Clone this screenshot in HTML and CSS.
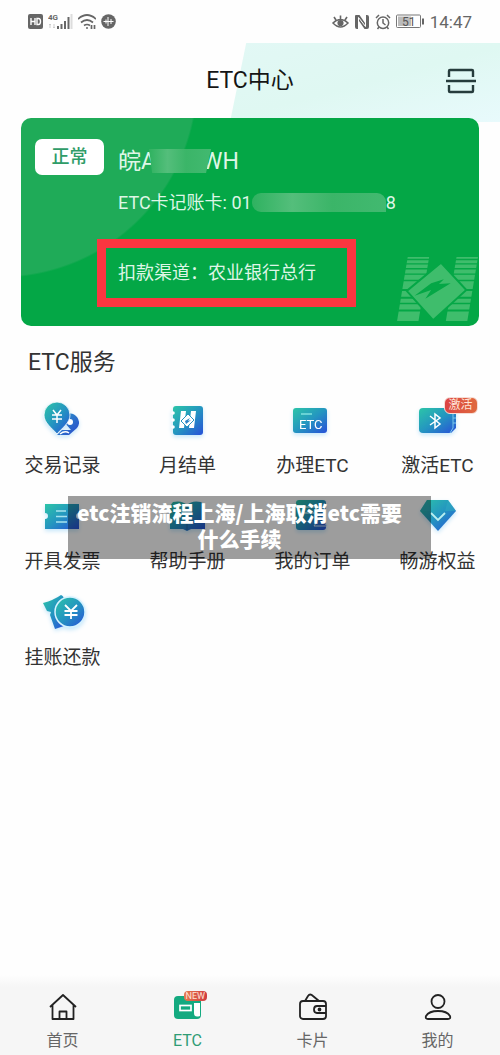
FILE: index.html
```html
<!DOCTYPE html>
<html lang="zh-CN">
<head>
<meta charset="utf-8">
<meta name="viewport" content="width=device-width, initial-scale=1">
<title>ETC中心</title>
<link rel="stylesheet" href="styles.css">
</head>
<body>
<svg class="defs" aria-hidden="true">
  <defs>
    <linearGradient id="blend" x1="0" y1="0" x2="1" y2="1"><stop offset="0" stop-color="#2cc5a8"/><stop offset=".5" stop-color="#2496c0"/><stop offset="1" stop-color="#2850d8"/></linearGradient>
    <linearGradient id="deep" x1="0" y1="0" x2="1" y2="1"><stop offset="0" stop-color="#2a9cc8"/><stop offset="1" stop-color="#2c48cc"/></linearGradient>
  </defs>
</svg>
<div class="page">
  <div class="status">
    <div class="status-group">
      <svg width="15" height="15" viewBox="0 0 15 15"><rect width="15" height="15" rx="2" fill="#666"/><path d="M3 4v7M7 4v7M3 7.500h4M9 4.500v6h1.500q2 0 2-3t-2-3z" fill="none" stroke="#fff" stroke-width="1.400"/></svg>
      <svg width="25" height="17" viewBox="0 0 25 17"><text x="0" y="7" class="tiny">4G</text><path d="M2 11v4M1 12l1-1 1 1M6 11v4M5 14l1 1 1-1" stroke="#ccc" fill="none"/><path d="M10 13v3M13.500 11v5M17 8v8M20.500 4v12" stroke="#666" stroke-width="2"/><path d="M23.500 1v15" stroke="#ddd" stroke-width="2"/></svg>
      <svg width="18" height="17" viewBox="0 0 18 17" fill="none" stroke="#666" stroke-width="1.700"><path d="M0 6Q9-2 18 6M3 9.500q6-5 12 0M6 12.500q3-2 6 0"/><circle cx="9" cy="15" r="1" fill="#666" stroke="none"/><path d="M13.500 12v4M16.500 12v4"/></svg>
      <svg width="15" height="15" viewBox="0 0 15 15"><circle cx="7.500" cy="7.500" r="7.300" fill="#666"/><path d="M2.500 7.500h10M5 5.500v4M7 3v9M10 5v5" stroke="#fff" stroke-width="1"/></svg>
    </div>
    <div class="status-group right">
      <svg width="17" height="16" viewBox="0 0 17 16" fill="none" stroke="#666" stroke-width="1.600"><path d="M1 9q7.500-7 15 0-7.500 8-15 0zM8.500 5V1.500M4 6L2 3M13 6l2-3"/><circle cx="8.500" cy="9" r="2.300" fill="#666"/></svg>
      <svg width="16" height="16" viewBox="0 0 16 16"><path d="M2 1h3.500L11 9V1h2q2 0 2 2v10q0 2-2 2h-2.500L5 7v8H3q-2 0-2-2V2q0-1 1-1z" fill="#666"/><path d="M4.500 15V3.500l7 9V1" fill="none" stroke="#fff" stroke-width="1"/></svg>
      <svg width="16" height="16" viewBox="0 0 16 16" fill="none" stroke="#666" stroke-width="1.500"><circle cx="8" cy="8.700" r="5.700"/><path d="M8 5v4l2.500 2M1 4l3-3M15 4l-3-3M4 13l-1.500 2M12 13l1.500 2"/></svg>
      <svg width="29" height="15" viewBox="0 0 29 15"><rect x=".5" y="1" width="24" height="12.500" rx="1" fill="#fff" stroke="#777"/><path d="M2 2.500h13v9.500H2z" fill="#bbb"/><path d="M27 4.500v6" stroke="#666" stroke-width="2"/><text x="6" y="11.500" class="charge">51</text></svg>
      <span class="time">14:47</span>
    </div>
  </div>

  <header class="header">
    <h1>ETC中心</h1>
    <button class="scan" type="button" aria-label="扫一扫"><svg width="30" height="26" viewBox="0 0 30 26" fill="none" stroke="#263c3c" stroke-width="2.400"><path d="M3 9V3q0-1 1-1h22q1 0 1 1v6M0 13h30M3 17v6q0 1 1 1h22q1 0 1-1v-6"/></svg></button>
  </header>

  <main>
    <section class="card">
      <span class="badge">正常</span>
      <div class="details">
        <p class="plate">皖A<span class="mosaic short"></span>WH</p>
        <p class="account">ETC卡记账卡: 01<span class="mosaic long"></span>8</p>
        <p class="channel">扣款渠道：农业银行总行</p>
      </div>
      <svg class="emblem" width="82" height="66" viewBox="0 0 84 66" aria-hidden="true">
        <defs><clipPath id="legs"><path d="M11 0h22L22 66H0zM61 0h22L72 66H50z"/></clipPath></defs>
        <path clip-path="url(#legs)" fill="#3fbd6c" d="M0 0h84v2H0zM0 3.500h84v3H0zM0 8h84v3.500H0zM0 13h84v4H0zM0 18.500h84v5H0zM0 25h84v8H0zM0 35h84v6H0zM0 43h84v4H0zM0 48.500h84v5.500H0zM0 56h84v10H0z"/>
        <path d="M45 6l26 28-34 31L10 35z" fill="#3fbd6c" stroke="#04a746" stroke-width="2"/>
        <path d="M18 40l17-13 13-4-5 5 12-1-26 16 6-9z" fill="#04a746"/>
      </svg>
    </section>

    <section class="services">
      <h2>ETC服务</h2>
      <div class="grid">
        <a class="item" href="#"><svg class="icon" viewBox="0 0 40 40"><path d="M24 14a9 9 0 0 1 10 14L26 35H14l5-5h9l-6-7z" fill="url(#deep)"/><path d="M17 34q5-4 9-1" fill="none" stroke="#fff" stroke-width="1.500"/><circle cx="27" cy="22" r="3" fill="#fff"/><path d="M14 34C9 28 1 23 1 15a13 13 0 0 1 26 0c0 8-8 13-13 19z" fill="url(#blend)" stroke="#fff" stroke-width=".8"/><path d="M10 10l4 5 4-5M14 15v8M9 15h10M9 19h10" fill="none" stroke="#fff" stroke-width="1.500"/></svg><span>交易记录</span></a>
        <a class="item" href="#"><svg class="icon" viewBox="0 0 40 40"><rect x="5" y="6" width="30" height="29" rx="3" fill="url(#blend)"/><g fill="#fff"><circle cx="5" cy="13" r="1.800"/><circle cx="5" cy="20" r="1.800"/><circle cx="5" cy="27" r="1.800"/><path d="M13 11h5l-2 17h-5zM23 11h5l-2 17h-5z"/><path d="M20 14l6 6-7 7-6-6z" stroke="#2794c0"/></g><path d="M17 21l5-3-2 3 3-1-5 4z" fill="#2b83c6"/></svg><span>月结单</span></a>
        <a class="item" href="#"><svg class="icon" viewBox="0 0 40 40"><rect x="0" y="8" width="34" height="25" rx="3" fill="url(#blend)"/><path d="M8 14h11" stroke="#7ee0df" stroke-width="1.500"/><text x="6" y="29" class="icon-text">ETC</text></svg><span>办理ETC</span></a>
        <a class="item" href="#"><svg class="icon" viewBox="0 0 40 40"><path d="M5 8h29q4 0 4 4v16l-5 5H5q-4 0-4-4V12q0-4 4-4z" fill="url(#blend)"/><path d="M35 14v14l-3 5M35 18h3M35 23h3" fill="none" stroke="#78c9ec"/><path d="M12 16l10 8-5 4V14l5 4-10 7" fill="none" stroke="#fff" stroke-width="1.500"/></svg><b class="tag">激活</b><span>激活ETC</span></a>
        <a class="item" href="#"><svg class="icon" viewBox="0 0 40 40"><path d="M2 8h34v9a3 3 0 0 0 0 6v10H2V23a3 3 0 0 0 0-6z" fill="url(#blend)"/><path d="M13 15h10M13 20.500h11M13 26h11" stroke="#a6e3ee" stroke-width="1.600"/></svg><span>开具发票</span></a>
        <a class="item" href="#"><svg class="icon" viewBox="0 0 40 40"><path d="M2 10l3-4q9-2 14 3 5-5 14-3l4 4v23H23l-4 2-4-2H2z" fill="url(#blend)"/><path d="M19 10v24" stroke="#2367a0"/></svg><span>帮助手册</span></a>
        <a class="item" href="#"><svg class="icon" viewBox="0 0 40 40"><rect x="3" y="4" width="30" height="30" rx="3" fill="url(#blend)"/><path d="M9 11h18M9 17h12" stroke="#a6e3ee" stroke-width="1.500"/><path d="M21 30l6-9 7 9z" fill="url(#deep)" stroke="#c9e4f8"/></svg><span>我的订单</span></a>
        <a class="item" href="#"><svg class="icon" viewBox="0 0 40 40"><path d="M9 4h21l8 11-18 20L2 15z" fill="url(#blend)"/><path d="M9 4L2 15h11zM30 4l8 11H27z" fill="#2faec0" opacity=".5"/><path d="M13 17l7 7 7-7" fill="none" stroke="#b9eff0" stroke-width="1.800"/></svg><span>畅游权益</span></a>
        <a class="item" href="#"><svg class="icon wide" viewBox="0 0 46 40"><path d="M3 11Q14 8 21 3q3 1 3 5v26l-9 3-5-14 1-3-4-1z" fill="url(#blend)"/><circle cx="30" cy="20" r="15" fill="url(#blend)" stroke="#d5f2ff" stroke-width="1.500"/><path d="M25 13l6 6 6-6M31 19v8M24.500 19h13M24.500 23h13" fill="none" stroke="#fff" stroke-width="1.800"/></svg><span>挂账还款</span></a>
      </div>
      <p class="caption">etc注销流程上海/上海取消etc需要什么手续</p>
    </section>
  </main>

  <nav class="tabs">
    <a class="tab" href="#"><svg class="tab-icon" viewBox="0 0 28 28" fill="none" stroke="#222" stroke-width="1.800" stroke-linejoin="round"><path d="M1 14L14 2l13 12M3.500 12v14h21V12M10.500 26v-7.500h7V26"/></svg><span>首页</span></a>
    <a class="tab active" href="#"><svg class="tab-icon" viewBox="0 0 28 28"><rect y="3" width="27" height="23" rx="4" fill="#14aa80"/><path d="M20 10h6v13q-6 2-6-3z" fill="#fff"/><rect x="6" y="12.500" width="11" height="5" fill="none" stroke="#fff" stroke-width="1.700"/></svg><b class="new">NEW</b><span>ETC</span></a>
    <a class="tab" href="#"><svg class="tab-icon" viewBox="0 0 28 28" fill="none" stroke="#222" stroke-width="1.800" stroke-linejoin="round"><rect x="1" y="8" width="26" height="18" rx="3"/><path d="M6 8l3-5q2-3 5 0l6 5M27 13h-9q-3 0-3 3.500t3 3.500h9"/><circle cx="20.500" cy="16.500" r="1" fill="#222"/></svg><span>卡片</span></a>
    <a class="tab" href="#"><svg class="tab-icon" viewBox="0 0 28 28" fill="none" stroke="#222" stroke-width="1.800"><circle cx="14" cy="8.500" r="6.500"/><path d="M4 26q-3 0-2-3 3-5 12-5t12 5q1 3-2 3z"/></svg><span>我的</span></a>
  </nav>
</div>
</body>
</html>
```
FILE: styles.css
```css
* { box-sizing: border-box; }
body { margin: 0; background: #fefefe; color: #333; font-family: Roboto, "Noto Sans CJK SC", sans-serif; }
h1, h2, p { margin: 0; font-weight: 400; }
a { color: inherit; text-decoration: none; }
svg { display: block; }
.defs { position: absolute; width: 0; height: 0; }
.page { display: flex; flex-direction: column; min-height: 100vh; }

.status { display: flex; justify-content: space-between; align-items: center; height: 43px; padding: 0 28px; }
.status-group { display: flex; align-items: center; gap: 5px; }
.time { font-size: 17px; line-height: 20px; color: #666; }
.tiny { font: bold 8px Roboto, sans-serif; fill: #666; }
.charge { font: 12px Roboto, sans-serif; fill: #555; }

.header { position: relative; display: flex; align-items: center; justify-content: center; height: 75px; padding-top: 1px; }
.header::before { content: ""; position: absolute; inset: 0 0 -4px 46%; background: linear-gradient(165deg, #e2f8f5 0%, #dff8f2 50%, #e8fafc 100%); clip-path: polygon(6% 0, 100% 0, 100% 100%, 0 100%); }
.header h1 { position: relative; font-size: 23px; line-height: 30px; color: #151515; }
.scan { position: absolute; right: 24px; padding: 0; border: 0; background: none; }

.card { position: relative; display: flex; align-items: flex-start; gap: 14px; margin: 0 21px; padding: 21px 14px 19px; border-radius: 10px; color: #def6e6; background: radial-gradient(circle at -21px -38px, #1fab58 196px, #04a746 198px); }
.badge { flex: none; width: 69px; border-radius: 7px; background: #fff; color: #2f9c68; font-size: 18px; font-weight: 500; line-height: 36px; text-align: center; }
.details { position: relative; z-index: 1; white-space: nowrap; }
.plate { font-size: 23px; line-height: 45px; }
.account { font-size: 18px; line-height: 38px; }
.mosaic { position: relative; z-index: 1; display: inline-block; vertical-align: middle; background: linear-gradient(90deg, #2fb260, #54be7b 30%, #3bb568 60%, #42b970); }
.mosaic.short { width: 62px; height: 24px; margin: -4px -9px 0 -7px; clip-path: polygon(0 0, 100% 0, 92% 100%, 5% 100%); }
.mosaic.long { width: 134px; height: 19px; margin-top: -4px; border-radius: 9px 9px 0 9px; }
.channel { width: max-content; margin: 17px 0 0 -21px; padding: 13px 31px 13px 12px; border: 9px solid #fb3640; font-size: 18px; line-height: 24px; }
.emblem { position: absolute; right: 0; bottom: 4px; }

.services { position: relative; padding-top: 21px; }
h2 { padding-left: 28px; font-size: 23px; line-height: 32px; }
.grid { display: grid; grid-template-columns: repeat(4, 1fr); row-gap: 16px; padding-top: 21px; }
.item { position: relative; display: flex; flex-direction: column; align-items: center; font-size: 19px; line-height: 28px; gap: 12px; }
.icon { width: 40px; height: 40px; filter: drop-shadow(0 2px 2px #c4e6fa); }
.icon.wide { width: 46px; }
.icon-text { font: 15px Roboto, sans-serif; font-size: 13px; fill: #fff; }
.tag { position: absolute; top: -3px; left: calc(50% + 6px); padding: 0 4px; border: 1px solid #f6ddd6; border-radius: 6px; background: linear-gradient(90deg, #dc4444, #df693e); color: #ffe3d6; font-size: 12px; font-weight: 400; line-height: 15px; }
.caption { position: absolute; top: 170px; left: 68px; right: 69px; padding: 3px 29px 8px 9px; background: rgba(0, 0, 0, .38); color: #fff; font-family: "Noto Sans CJK SC", sans-serif; font-size: 21px; font-weight: 900; line-height: 26px; text-align: center; }

.tabs { display: grid; grid-template-columns: repeat(4, 1fr); margin-top: auto; padding: 18px 0 2px; background: linear-gradient(#fefefe, #f6f6f6 12px); }
.tab { position: relative; display: flex; flex-direction: column; align-items: center; gap: 8px; color: #666; font-size: 16px; line-height: 24px; }
.tab-icon { width: 28px; height: 28px; }
.active { color: #2f9c75; }
.new { position: absolute; top: -2px; left: calc(50% - 4px); padding: 0 2px; border-radius: 4px; background: linear-gradient(90deg, #e5794c, #cf3c42); color: #ffe3d6; font-size: 9px; font-weight: 400; line-height: 10px; }
```
